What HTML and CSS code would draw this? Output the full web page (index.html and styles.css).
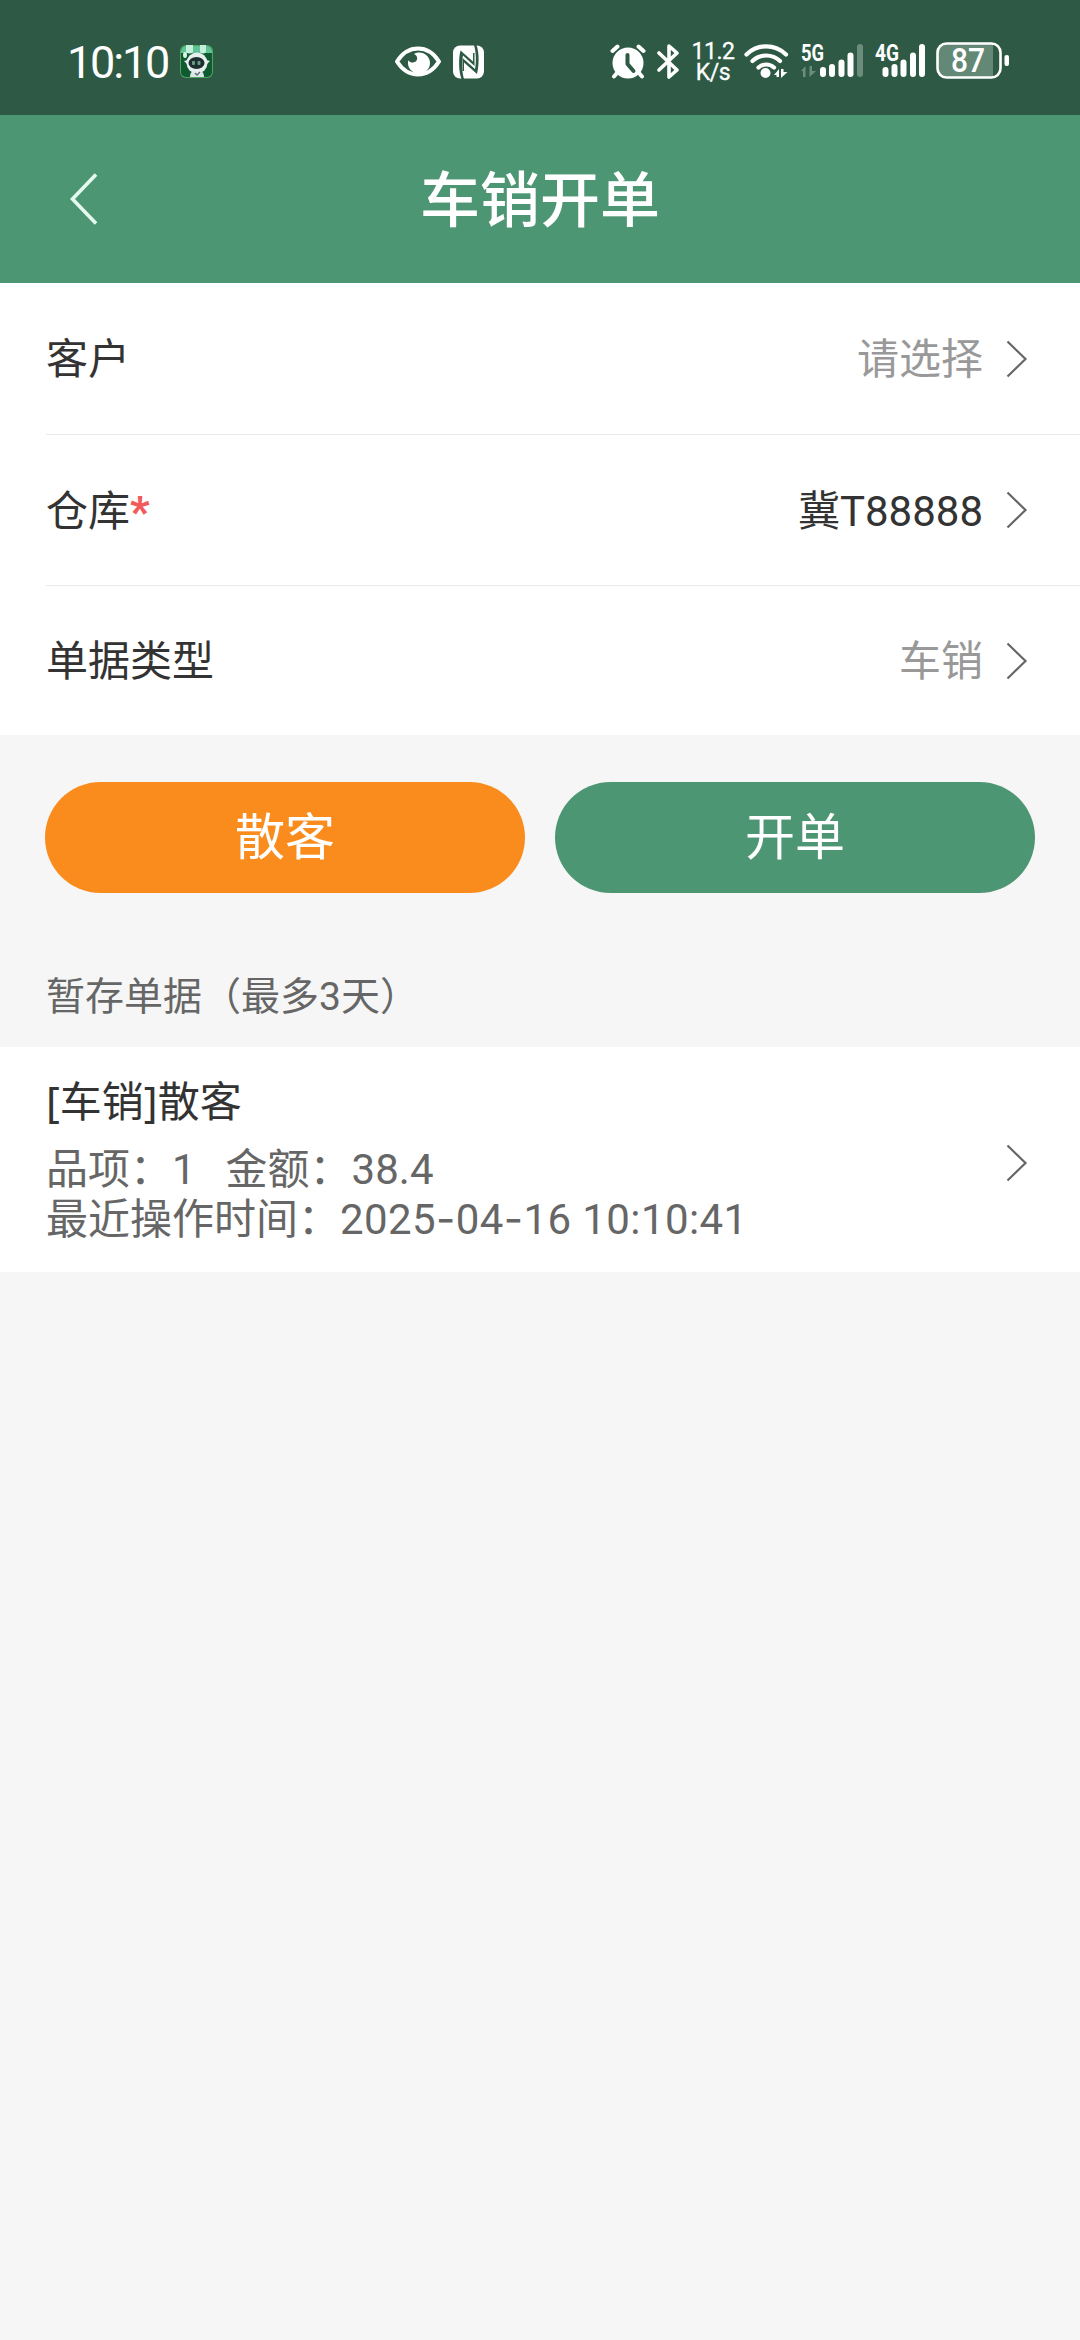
FILE: index.html
```html
<!DOCTYPE html>
<html lang="zh-CN">
<head>
  <meta charset="UTF-8">
  <meta name="viewport" content="width=device-width, initial-scale=1.0">
  <title>车销开单</title>
  <link rel="stylesheet" href="styles.css">
</head>
<body>
  <div class="status-bar">
    <div class="status-left">
      <span class="clock">10:10</span>
      <svg class="app-icon" width="33" height="33" viewBox="0 0 33 33">
        <rect width="33" height="33" rx="6" fill="#4fa35c"/>
        <rect x="1" y="1" width="31" height="31" rx="5" fill="#0f5a30"/>
        <path d="M1 6a5 5 0 0 1 5-5h21a5 5 0 0 1 5 5v2H1z" fill="#5fc294"/>
        <path d="M6 0h7v6a3.500 2.500 0 0 1-7 0zM20 0h6v6a3 2.500 0 0 1-6 0z" fill="#c4efdb"/>
        <ellipse cx="5" cy="10" rx="2" ry="3" fill="#d8f5e6"/>
        <path d="M10 32c0-5 3-7 7-7s7 2 7 7z" fill="#dbe6e6"/>
        <circle cx="17" cy="18" r="10.500" fill="#e6eeee"/>
        <path d="M4 16l4-1v5zM30 16l-4-1v5z" fill="#e6eeee"/>
        <ellipse cx="16.500" cy="18" rx="8" ry="6" fill="#1c2e2e"/>
        <rect x="12" y="16" width="3" height="4" rx="1" fill="#6d9a86"/>
        <rect x="17.500" y="16" width="3" height="4" rx="1" fill="#6d9a86"/>
        <path d="M15 28l2 2 3-3" fill="none" stroke="#5b7475" stroke-width="1.500"/>
      </svg>
    </div>

    <div class="status-center">
      <svg width="46" height="40" viewBox="0 0 46 40">
        <path d="M2 20.500C8 11 15 7.500 23 7.500S38 11 44 20.500C38 30 31 33.500 23 33.500S8 30 2 20.500z" fill="none" stroke="#fff" stroke-width="4" stroke-linejoin="round"/>
        <path d="M19 13c7-4 16 1 16 9 0 6-5 10.500-11 10.500S13 28 13 22c0-1 0-2 .4-2.800 2 3.800 8.600 3 8.800-1.600 0-2-1.200-4-3.200-4.600z" fill="#fff"/>
      </svg>
      <svg width="32" height="40" viewBox="0 0 32 40">
        <rect x="0" y="4.500" width="31" height="33" rx="7" fill="#fff"/>
        <g fill="#2e5a45">
          <path d="M7.500 9.500L20 20.500V12l1.500 0V25L10 14.500C8.500 21 9 31 11 38H8.500C5.500 30 5.500 17 7.500 9.500z"/>
          <path d="M24 33L11 21.500V30H9.500V17L22 28C23.500 21 23 11 21 4h2.500C26.500 12 26 25 24 33z"/>
        </g>
      </svg>
    </div>

    <div class="status-right">
      <svg class="alarm" width="36" height="40" viewBox="0 0 36 40">
        <circle cx="18" cy="22" r="15.500" fill="#fff"/>
        <path d="M2.500 10l5-4.500M33.500 10l-5-4.500M7 32l-3 3.500M29 32l3 3.500" stroke="#fff" stroke-width="4" stroke-linecap="round"/>
        <path d="M17.500 14v9l6 7" fill="none" stroke="#2e5a45" stroke-width="4" stroke-linecap="round" stroke-linejoin="round"/>
      </svg>
      <svg class="bluetooth" width="24" height="40" viewBox="0 0 24 40">
        <path d="M2 12l18 17-8 7V5l8 7L2 29" fill="none" stroke="#fff" stroke-width="3.600" stroke-linecap="round" stroke-linejoin="round"/>
      </svg>
      <div class="speed"><span>11.2</span><span>K/s</span></div>
      <svg class="wifi" width="46" height="40" viewBox="0 0 46 40">
        <g fill="none" stroke="#fff" stroke-width="4.200" stroke-linecap="round">
          <path d="M2.500 13.500a28 28 0 0 1 39.500 0"/>
          <path d="M8.500 20a20 20 0 0 1 27.500 0"/>
          <path d="M14.500 26.500a11.500 11.500 0 0 1 15.500 0"/>
        </g>
        <circle cx="21.500" cy="32" r="5" fill="#fff"/>
        <path d="M30 34l5-6v8h-2.500v-2zM37 28h2.500v3h4l-6.500 6z" fill="#fff"/>
      </svg>
      <svg class="signal" width="63" height="40" viewBox="0 0 63 40">
        <text class="net-label" x="0" y="19.500" textLength="23" lengthAdjust="spacingAndGlyphs">5G</text>
        <path d="M0 30l4.500-5v11H2V30zM8.500 25H11v5h4l-6.500 6z" fill="#6a8d7c"/>
        <g stroke="#fff" stroke-width="6" stroke-linecap="round">
          <path d="M22 29v4M31 26v7M40.500 21.500V33M49.500 14.500V33"/>
          <path d="M59 6v27" stroke="#6a8d7c"/>
        </g>
      </svg>
      <svg class="signal" width="50" height="40" viewBox="0 0 50 40">
        <text class="net-label" x="0" y="19.500" textLength="24" lengthAdjust="spacingAndGlyphs">4G</text>
        <path d="M10.500 29v4M19.500 26v7M28.500 21.500V33M38 14.500V33M47 6v27" stroke="#fff" stroke-width="6" stroke-linecap="round"/>
      </svg>
      <svg class="battery" width="74" height="40" viewBox="0 0 74 40">
        <path d="M10 2h47v35H10a8 8 0 0 1-8-8V10a8 8 0 0 1 8-8z" fill="#648876"/>
        <rect x="1.500" y="2.500" width="63" height="34" rx="9" fill="none" stroke="#fff" stroke-width="2.600"/>
        <rect x="68.500" y="14" width="4.500" height="11" rx="2" fill="#fff"/>
        <text class="battery-level" x="15" y="31" textLength="34" lengthAdjust="spacingAndGlyphs">87</text>
      </svg>
    </div>
  </div>

  <header class="nav-bar">
    <svg class="back" width="28" height="52" viewBox="0 0 28 52">
      <path d="M26 1.500L2.500 26 26 50.500" fill="none" stroke="#e6fbef" stroke-width="3.600"/>
    </svg>
    <h1 class="nav-title">车销开单</h1>
  </header>

  <div class="form">
    <div class="form-row">
      <span class="form-label">客户</span>
      <span class="form-value placeholder">请选择</span>
      <svg class="arrow" width="22" height="38" viewBox="0 0 22 38"><path d="M1.500 1.500L19.500 19 1.500 36.500"/></svg>
    </div>
    <div class="form-row">
      <span class="form-label">仓库<span class="required">*</span></span>
      <span class="form-value">冀T88888</span>
      <svg class="arrow" width="22" height="38" viewBox="0 0 22 38"><path d="M1.500 1.500L19.500 19 1.500 36.500"/></svg>
    </div>
    <div class="form-row">
      <span class="form-label">单据类型</span>
      <span class="form-value placeholder">车销</span>
      <svg class="arrow" width="22" height="38" viewBox="0 0 22 38"><path d="M1.500 1.500L19.500 19 1.500 36.500"/></svg>
    </div>
  </div>

  <div class="actions">
    <button class="btn btn-orange">散客</button>
    <button class="btn btn-green">开单</button>
  </div>

  <h2 class="section-title">暂存单据（最多3天）</h2>

  <div class="draft">
    <div class="draft-info">
      <div class="draft-name"><span class="bracket">[</span>车销<span class="bracket">]</span>散客</div>
      <div class="draft-line"><span class="draft-count">品项：1</span><span>金额：38.4</span></div>
      <div class="draft-line">最近操作时间：<span class="draft-time">2025<span class="dash">-</span>04<span class="dash">-</span>16 10:10:41</span></div>
    </div>
    <svg class="arrow" width="22" height="38" viewBox="0 0 22 38"><path d="M1.500 1.500L19.500 19 1.500 36.500"/></svg>
  </div>
</body>
</html>
```

FILE: styles.css
```css
* {
  box-sizing: border-box;
}

body {
  margin: 0;
  min-height: 2340px;
  background-color: #f6f6f6;
  color: #333;
  font-family: Roboto, "Noto Sans CJK SC", sans-serif;
  font-size: 42px;
}

svg {
  display: block;
  flex-shrink: 0;
}

/* Status bar */
.status-bar {
  display: flex;
  align-items: center;
  height: 115px;
  padding: 7px 70px 0 67px;
  background-color: #2e5a45;
  color: #fff;
}

.status-left {
  display: flex;
  align-items: center;
  width: 328px;
}

.clock {
  width: 113px;
  padding-top: 3px;
  font-size: 45px;
  line-height: 54px;
  letter-spacing: -2.2px;
}

.status-center {
  display: flex;
  gap: 12px;
}

.status-right {
  display: flex;
  align-items: center;
  margin-left: auto;
}

.bluetooth {
  margin-left: 11px;
}

.speed {
  display: flex;
  flex-direction: column;
  align-items: center;
  width: 44px;
  margin-left: 10px;
  padding-top: 2px;
  font-size: 23px;
  line-height: 21px;
  letter-spacing: -0.5px;
  -webkit-text-stroke: 0.3px #fff;
}

.wifi {
  margin-left: 9px;
}

.signal {
  margin-left: 11px;
}

.net-label {
  fill: #fff;
  font-size: 23px;
  font-weight: 700;
}

.battery {
  margin-left: 11px;
}

.battery-level {
  fill: #fff;
  font-size: 33px;
  font-weight: 500;
}

/* Navigation */
.nav-bar {
  display: grid;
  grid-template-columns: 98px 1fr 98px;
  align-items: center;
  height: 168px;
  background-color: #4d9674;
}

.back {
  justify-self: end;
}

.nav-title {
  margin: 0;
  padding-top: 6px;
  color: #fff;
  font-size: 60px;
  font-weight: 500;
  line-height: 84px;
  text-align: center;
}

/* Form */
.form {
  padding-left: 46px;
  background-color: #fff;
}

.form-row {
  display: flex;
  align-items: center;
  height: 151px;
  padding-right: 52px;
}

.form-row + .form-row {
  border-top: 1px solid #ebebeb;
}

.form-row:last-child {
  height: 150px;
}

.form-label {
  flex: 1;
  padding-bottom: 6px;
}

.required {
  color: #f35b5b;
  font-weight: 900;
}

.form-value {
  margin-right: 23px;
  padding-bottom: 6px;
}

.placeholder {
  color: #999;
}

.arrow path {
  fill: none;
  stroke: #666;
  stroke-width: 2.2;
}

/* Buttons */
.actions {
  display: flex;
  gap: 30px;
  padding: 47px 45px 0;
}

.btn {
  flex: 1;
  height: 111px;
  padding: 0 0 9px;
  border: none;
  border-radius: 56px;
  color: #fff;
  font-family: inherit;
  font-size: 50px;
}

.btn-orange {
  background-color: #fa8c1e;
}

.btn-green {
  background-color: #4d9674;
}

/* Saved drafts */
.section-title {
  margin: 75px 0 21px;
  padding-left: 46px;
  color: #666;
  font-size: 39px;
  font-weight: 400;
  line-height: 58px;
}

.draft {
  display: flex;
  align-items: center;
  justify-content: space-between;
  height: 225px;
  padding: 6px 52px 0 46px;
  background-color: #fff;
}

.draft-info {
  padding-bottom: 10px;
}

.draft-name {
  margin-bottom: 12px;
  line-height: 60px;
}

.bracket {
  font-family: "Noto Sans", sans-serif;
}

.draft-line {
  color: #666;
  line-height: 49px;
}

.draft-count {
  margin-right: 30px;
}

.draft-time {
  letter-spacing: 0.4px;
}

.dash {
  font-family: Inter, sans-serif;
}
```
